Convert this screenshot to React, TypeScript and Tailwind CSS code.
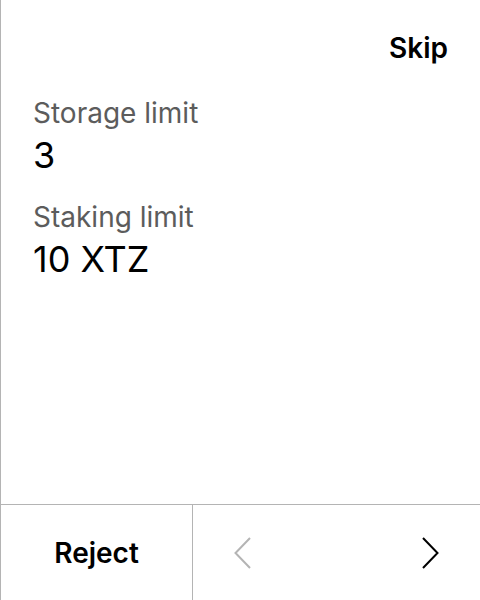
const font = { fontFamily: "Inter, 'Liberation Sans', sans-serif" }

function Chevron({ dir, className }: { dir: "left" | "right"; className: string }) {
  return (
    <svg width="17" height="32" viewBox="0 0 17 32" fill="none" className={className}>
      <path
        d={dir === "left" ? "M16 1 L1.5 16 L16 31" : "M1 1 L15.5 16 L1 31"}
        stroke="currentColor"
        strokeWidth="2"
      />
    </svg>
  )
}

function Field({ label, value }: { label: string; value: string }) {
  return (
    <div className="flex flex-col">
      <span className="text-[28px] leading-[36px] text-[#5c5c5c]">{label}</span>
      <span className="text-[36px] leading-[48px] text-black">{value}</span>
    </div>
  )
}

export default function App() {
  return (
    <div className="flex h-[600px] w-[480px] flex-col border-l border-[#b4b4b4] bg-white" style={font}>
      <div className="flex flex-1 flex-col">
        <div className="flex justify-end px-8 pt-[30px]">
          <span className="text-[28px] leading-[36px] font-semibold text-black">Skip</span>
        </div>
        <div className="flex flex-col gap-5 px-8 pt-[29px]">
          <Field label="Storage limit" value="3" />
          <Field label="Staking limit" value="10 XTZ" />
        </div>
      </div>
      <div className="flex h-[96px] border-t border-[#b4b4b4]">
        <div className="flex w-[192px] items-center justify-center border-r border-[#b4b4b4]">
          <span className="text-[28px] leading-[36px] font-semibold text-black">Reject</span>
        </div>
        <div className="flex flex-1 items-center justify-between px-[41px]">
          <Chevron dir="left" className="text-[#b4b4b4]" />
          <Chevron dir="right" className="text-black" />
        </div>
      </div>
    </div>
  )
}
